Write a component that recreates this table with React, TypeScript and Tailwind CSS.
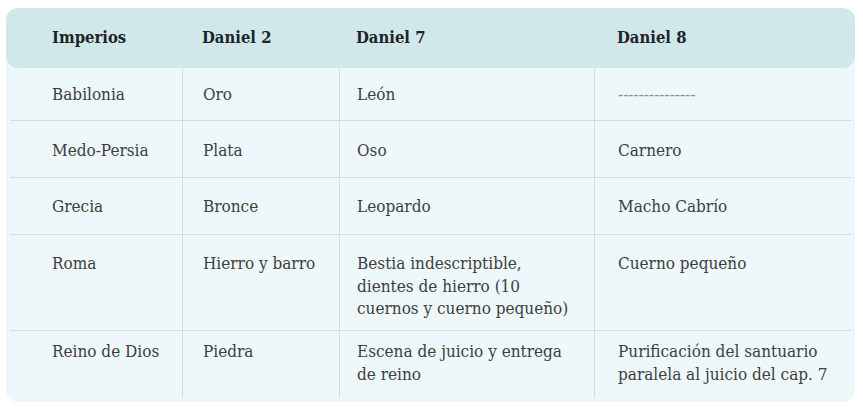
const rows = [
  { cells: ["Babilonia", "Oro", "León", "---------------"], h: "h-[53px]", pt: "pt-[15px]" },
  { cells: ["Medo-Persia", "Plata", "Oso", "Carnero"], h: "h-[57px]", pt: "pt-[18px]" },
  { cells: ["Grecia", "Bronce", "Leopardo", "Macho Cabrío"], h: "h-[57px]", pt: "pt-[17px]" },
  {
    cells: ["Roma", "Hierro y barro", "Bestia indescriptible, dientes de hierro (10 cuernos y cuerno pequeño)", "Cuerno pequeño"],
    h: "h-[96px]",
    pt: "pt-[17px]",
  },
  {
    cells: ["Reino de Dios", "Piedra", "Escena de juicio y entrega de reino", "Purificación del santuario paralela al juicio del cap. 7"],
    h: "h-[67px]",
    pt: "pt-[9px]",
  },
];

const headers = ["Imperios", "Daniel 2", "Daniel 7", "Daniel 8"];

// per-column text inset so the text lines up with the reference
const colPad = ["pl-[42px]", "pl-[20px] pr-2", "pl-[17px] pr-4", "pl-[23px] pr-3"];

export default function App() {
  return (
    <div
      className="min-h-screen bg-white pl-[6px] pr-[8px] pt-2"
      style={{ fontFamily: '"DejaVu Serif Condensed", "DejaVu Serif", serif' }}
    >
      <div className="rounded-xl bg-[#eef7fa] pb-1">
        {/* Header */}
        <div className="grid h-[60px] grid-cols-[176px_157px_255px_1fr] items-center rounded-xl bg-[#d1e8eb] text-[16.5px] font-semibold text-[#1e2426]">
          {headers.map((h, i) => (
            <div key={h} className={i === 0 ? "pl-[46px]" : colPad[i]}>
              {h}
            </div>
          ))}
        </div>

        {/* Body */}
        <div className="px-1">
          {rows.map((r, ri) => (
            <div
              key={r.cells[0]}
              className={`grid grid-cols-[172px_157px_255px_1fr] ${r.h} ${ri < rows.length - 1 ? "border-b border-[#d5dadc]" : ""}`}
            >
              {r.cells.map((c, ci) => (
                <div
                  key={ci}
                  className={`${colPad[ci]} ${r.pt} text-[17px] leading-[22.5px] ${ci > 0 ? "border-l border-[#d8dcde]" : ""} ${
                    c.startsWith("---") ? "text-[#8a8f91]" : "text-[#3b3f41]"
                  }`}
                >
                  {c}
                </div>
              ))}
            </div>
          ))}
        </div>
      </div>
    </div>
  );
}
